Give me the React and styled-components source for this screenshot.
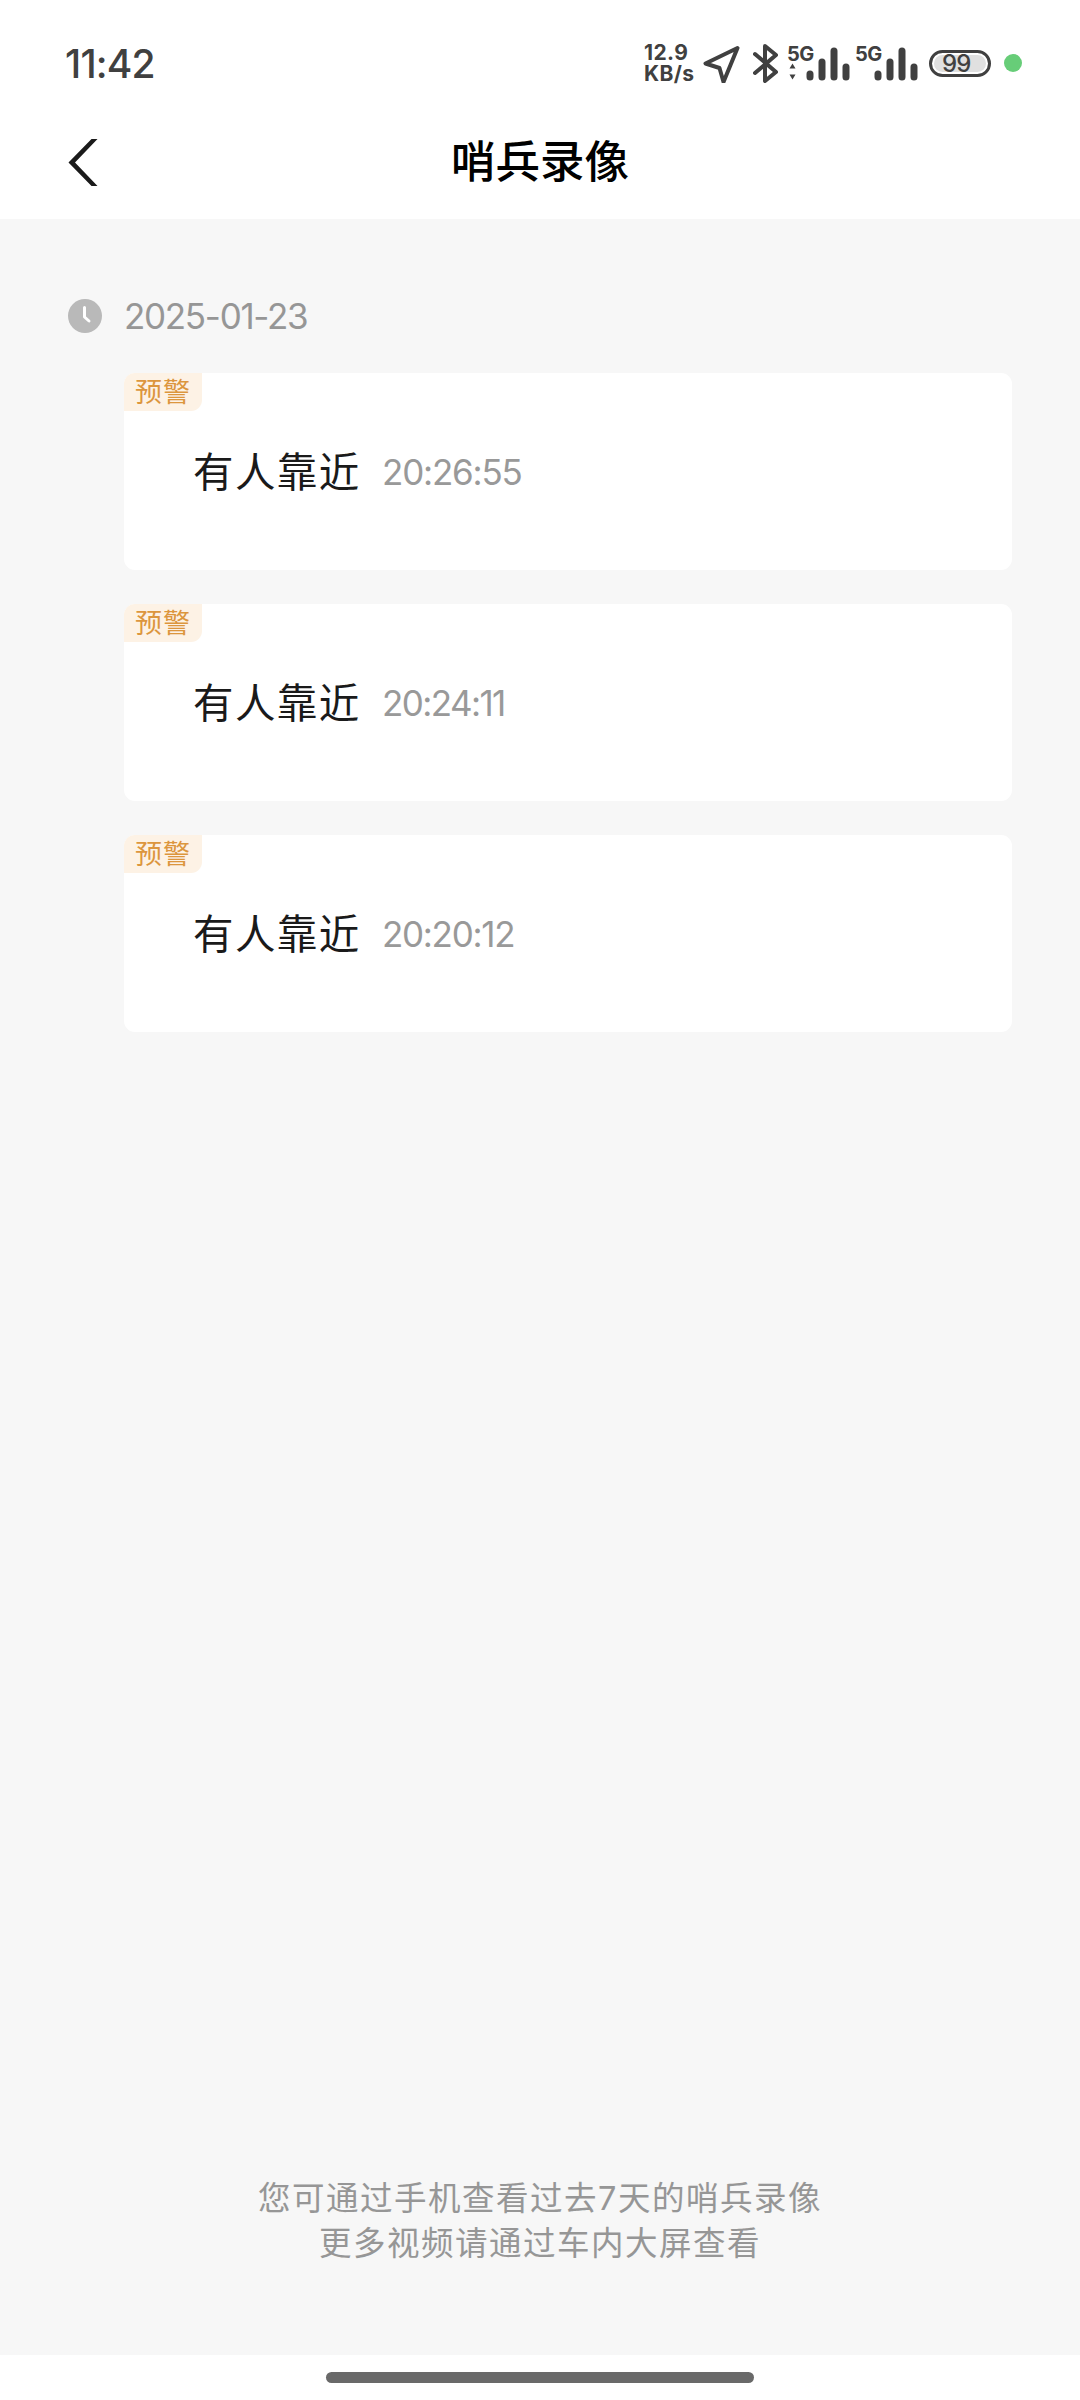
import React from 'react';
import styled, { createGlobalStyle } from "styled-components";

const GlobalStyle = createGlobalStyle`
  * {
    box-sizing: border-box;
  }

  body {
    margin: 0;
    background-color: white;
    font-family: Inter, "Noto Sans CJK SC", sans-serif;
  }
`;

const StyleContainer = styled.div`
  display: flex;
  flex-direction: column;
  width: 1080px;
  height: 2400px;
  overflow: hidden;
  background-color: white;
`;

const StyleStatusBar = styled.div`
  display: flex;
  align-items: center;
  justify-content: space-between;
  height: 126px;
  padding: 0 58px 0 65px;
  color: #404040;
`;

const StyleClock = styled.div`
  padding-top: 2px;
  font-size: 39px;
  font-weight: 500;
  line-height: 46px;
  letter-spacing: -0.8px;
`;

const StyleStatusIcons = styled.div`
  display: flex;
  align-items: center;
`;

const StyleSpeed = styled.div`
  width: 58px;
  padding-left: 1px;
  font-size: 21px;
  font-weight: 700;
  line-height: 21px;
  letter-spacing: 0.4px;
  white-space: nowrap;
`;

const StyleIcon = styled.svg`
  display: block;
  flex: none;
  margin-right: ${(props) => props.$gap || 0}px;
`;

const StyleSignal = styled.div`
  display: flex;
  width: ${(props) => props.$width}px;
  height: 40px;
`;

const StyleNetwork = styled.div`
  width: 18px;
  font-size: 20px;
  font-weight: 700;
  line-height: 22px;
  letter-spacing: -0.6px;
  white-space: nowrap;
`;

const StyleBattery = styled.div`
  width: 62px;
  height: 27px;
  margin-right: 13px;
  padding: 2px;
  border: 3px solid #404040;
  border-radius: 14px;
`;

const StyleBatteryLevel = styled.div`
  display: flex;
  align-items: center;
  height: 17px;
  padding-left: 8px;
  border-radius: 9px;
  background-color: #e0e0e0;
  font-size: 24px;
  font-weight: 500;
  letter-spacing: -0.8px;
`;

const StyleDot = styled.div`
  width: 18px;
  height: 18px;
  border-radius: 50%;
  background-color: #67cd78;
`;

const StyleHeader = styled.div`
  display: grid;
  grid-template-columns: 68px 1fr 68px;
  height: 93px;
`;

const StyleBack = styled.div`
  padding: 13px 0 0 68px;
`;

const StyleTitle = styled.div`
  padding-top: 3px;
  color: #000;
  font-size: 44.5px;
  font-weight: 500;
  line-height: 66px;
  text-align: center;
`;

const StyleContent = styled.div`
  display: flex;
  flex: 1;
  flex-direction: column;
  padding: 74px 68px 0;
  background-color: #f7f7f7;
`;

const StyleDate = styled.div`
  display: flex;
  align-items: center;
  gap: 22px;
  height: 46px;
  color: #969696;
  font-size: 35px;
  line-height: 46px;
  letter-spacing: -1.3px;
`;

const StyleList = styled.div`
  display: flex;
  flex-direction: column;
  gap: 34px;
  margin-top: 34px;
  padding-left: 56px;
`;

const StyleCard = styled.div`
  height: 197px;
  border-radius: 11px;
  background-color: white;
`;

const StyleBadge = styled.div`
  width: 78px;
  height: 38px;
  padding-left: 11px;
  border-radius: 11px 0 11px 0;
  background-color: #fdf2e5;
  color: #dc963e;
  font-size: 27px;
  line-height: 40px;
  letter-spacing: 1px;
`;

const StyleEvent = styled.div`
  display: flex;
  align-items: center;
  height: 50px;
  margin-top: 37px;
  padding-left: 69px;
`;

const StyleEventName = styled.div`
  width: 189px;
  color: #1a1a1a;
  font-size: 40.5px;
  line-height: 50px;
  letter-spacing: 1.4px;
`;

const StyleEventTime = styled.div`
  padding-bottom: 2px;
  color: #999;
  font-size: 35px;
  line-height: 48px;
  letter-spacing: ${(props) => props.$spacing}px;
`;

const StyleTip = styled.div`
  margin-top: auto;
  padding-bottom: 89px;
  color: #969696;
  font-size: 32.5px;
  line-height: 45px;
  letter-spacing: 1.5px;
  text-align: center;
`;

const StyleNavBar = styled.div`
  height: 45px;
  padding-top: 17px;
`;

const StyleHandle = styled.div`
  width: 428px;
  height: 11px;
  margin: 0 auto;
  border-radius: 6px;
  background-color: #696969;
`;

const events = [
  { time: "20:26:55", spacing: -1.2 },
  { time: "20:24:11", spacing: -1.6 },
  { time: "20:20:12", spacing: -1.3 },
];

const Signal = ({ width, active }) => {
  return (
    <StyleSignal $width={width}>
      <StyleNetwork>5G</StyleNetwork>
      <StyleIcon width="46" height="40" viewBox="0 0 46 40" overflow="visible">
        <path d="M5 31v3M17 19v15M29 8v26M41 24v10" stroke="#404040" strokeWidth="7" strokeLinecap="round" />
        {active && (
          <path d="M-15.500 25.500l3-5 3 5zM-15.500 31.500l3 5 3-5z" fill="#404040" />
        )}
      </StyleIcon>
    </StyleSignal>
  )
}

const App = () => {
  return (
    <StyleContainer>
      <GlobalStyle />
      <StyleStatusBar>
        <StyleClock>11:42</StyleClock>
        <StyleStatusIcons>
          <StyleSpeed>12.9<br />KB/s</StyleSpeed>
          <StyleIcon width="40" height="40" viewBox="0 0 40 40" $gap={12}>
            <path d="M36.500 6L4.500 21.500l14 4.500 4 14z" transform="translate(0 -1)" fill="none" stroke="#404040" strokeWidth="4" strokeLinejoin="round" />
          </StyleIcon>
          <StyleIcon width="26" height="40" viewBox="0 0 26 40" $gap={8}>
            <path d="M2 11l21 18-11 9V3l11 9L2 30" fill="none" stroke="#404040" strokeWidth="4" strokeLinecap="round" strokeLinejoin="round" />
          </StyleIcon>
          <Signal width={68} active />
          <Signal width={74} />
          <StyleBattery>
            <StyleBatteryLevel>99</StyleBatteryLevel>
          </StyleBattery>
          <StyleDot />
        </StyleStatusIcons>
      </StyleStatusBar>
      <StyleHeader>
        <StyleBack>
          <StyleIcon width="30" height="47" viewBox="0 0 30 47">
            <path d="M23.500 0H29.500L7 23.500 29.500 47H23.500L.500 23.500z" fill="#1a1a1a" />
          </StyleIcon>
        </StyleBack>
        <StyleTitle>哨兵录像</StyleTitle>
      </StyleHeader>
      <StyleContent>
        <StyleDate>
          <StyleIcon width="34" height="34" viewBox="0 0 34 34">
            <circle cx="17" cy="17" r="17" fill="#b9b9b9" />
            <path d="M16.500 8.500v9.500l4.500 4" fill="none" stroke="white" strokeWidth="3" strokeLinecap="round" strokeLinejoin="round" />
          </StyleIcon>
          2025-01-23
        </StyleDate>
        <StyleList>
          {events.map((event) => (
            <StyleCard key={event.time}>
              <StyleBadge>预警</StyleBadge>
              <StyleEvent>
                <StyleEventName>有人靠近</StyleEventName>
                <StyleEventTime $spacing={event.spacing}>{event.time}</StyleEventTime>
              </StyleEvent>
            </StyleCard>
          ))}
        </StyleList>
        <StyleTip>
          您可通过手机查看过去7天的哨兵录像<br />
          更多视频请通过车内大屏查看
        </StyleTip>
      </StyleContent>
      <StyleNavBar>
        <StyleHandle />
      </StyleNavBar>
    </StyleContainer>
  )
}

export default App
